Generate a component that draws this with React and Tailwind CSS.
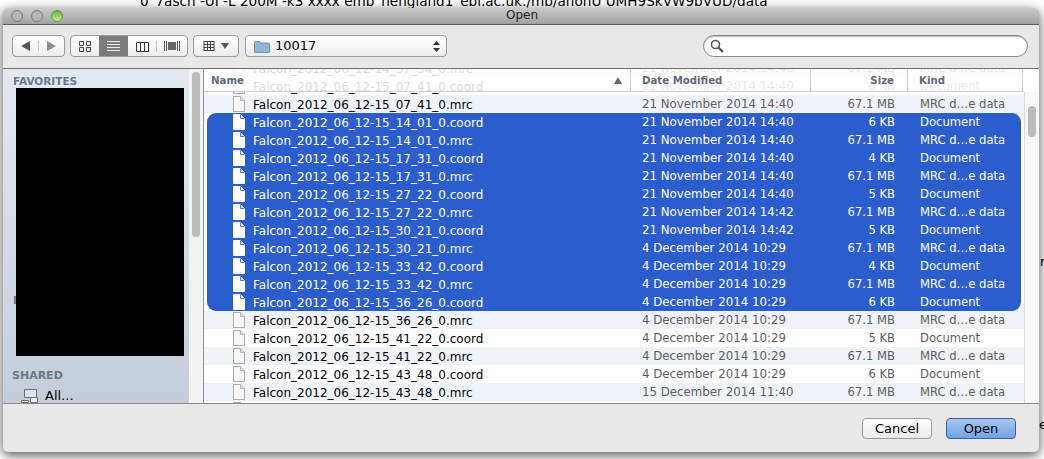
import React from "react";

const prefix = "Falcon_2012_06_12-";
const rows = [
  ["14_57_54_0.mrc", "21 November 2014 14:40", "67.1 MB", "MRC d…e data"],
  ["15_07_41_0.coord", "21 November 2014 14:40", "6 KB", "Document"],
  ["15_07_41_0.mrc", "21 November 2014 14:40", "67.1 MB", "MRC d…e data"],
  ["15_14_01_0.coord", "21 November 2014 14:40", "6 KB", "Document"],
  ["15_14_01_0.mrc", "21 November 2014 14:40", "67.1 MB", "MRC d…e data"],
  ["15_17_31_0.coord", "21 November 2014 14:40", "4 KB", "Document"],
  ["15_17_31_0.mrc", "21 November 2014 14:40", "67.1 MB", "MRC d…e data"],
  ["15_27_22_0.coord", "21 November 2014 14:40", "5 KB", "Document"],
  ["15_27_22_0.mrc", "21 November 2014 14:42", "67.1 MB", "MRC d…e data"],
  ["15_30_21_0.coord", "21 November 2014 14:42", "5 KB", "Document"],
  ["15_30_21_0.mrc", "4 December 2014 10:29", "67.1 MB", "MRC d…e data"],
  ["15_33_42_0.coord", "4 December 2014 10:29", "4 KB", "Document"],
  ["15_33_42_0.mrc", "4 December 2014 10:29", "67.1 MB", "MRC d…e data"],
  ["15_36_26_0.coord", "4 December 2014 10:29", "6 KB", "Document"],
  ["15_36_26_0.mrc", "4 December 2014 10:29", "67.1 MB", "MRC d…e data"],
  ["15_41_22_0.coord", "4 December 2014 10:29", "5 KB", "Document"],
  ["15_41_22_0.mrc", "4 December 2014 10:29", "67.1 MB", "MRC d…e data"],
  ["15_43_48_0.coord", "4 December 2014 10:29", "6 KB", "Document"],
  ["15_43_48_0.mrc", "15 December 2014 11:40", "67.1 MB", "MRC d…e data"],
];

const DocIcon = ({ selected }) => (
  <svg width="12" height="16" viewBox="0 0 12 16" className="shrink-0">
    <path d="M.5 .5H7.500L11.500 4.500V15.500H.5Z" fill={selected ? "#ffffff" : "#f7f7f7"} stroke={selected ? "#ffffff" : "#a9a9a9"} />
    <path d="M7.500 .5V4.500H11.500" fill={selected ? "#e4e8f2" : "#e2e2e2"} stroke={selected ? "#2c5dcd" : "#a9a9a9"} strokeWidth=".8" />
  </svg>
);

const Row = ({ row, index }) => {
  const selected = index >= 3 && index <= 13;
  const radius = index === 3 ? "rounded-t-[9px]" : index === 13 ? "rounded-b-[9px]" : "";
  const band = index % 2 === 0 ? "bg-[#eff2f7]" : "bg-white";
  return (
    <div className={`h-[18px] ${selected ? "bg-white" : band}`}>
      <div className={`mx-[3px] flex h-[18px] items-center whitespace-nowrap text-[12px] ${selected ? `bg-[#2c5dcd] text-white ${radius}` : "text-[#5e5e5e]"}`}>
        <div className={`flex w-[435px] items-center gap-[8px] pl-[26px] ${selected ? "text-white" : "text-black"}`}>
          <DocIcon selected={selected} />
          <span className="pt-[1px]">{prefix}{row[0]}</span>
        </div>
        <div className="w-[183px] pt-[2px] text-[11.8px]">{row[1]}</div>
        <div className="w-[70px] pt-[2px] text-right text-[11.6px]">{row[2]}</div>
        <div className="pl-[25px] pt-[2px] text-[11.6px]">{row[3]}</div>
      </div>
    </div>
  );
};

const Seg = ({ children, className = "" }) => (
  <div className={`flex h-[22px] items-center rounded-[4px] border border-[#9a9a9a] bg-gradient-to-b from-white to-[#ececec] ${className}`}>
    {children}
  </div>
);

const Toolbar = () => (
  <div className="flex h-[44px] shrink-0 items-center border-b border-[#6f6f6f] bg-[#e8e8e8] pb-[1px] pl-[9px] pr-[11px]">
    <Seg className="w-[53px]">
      <div className="flex w-[26px] justify-center border-r border-[#c4c4c4]">
        <svg width="9" height="10"><path d="M9 0V10L0 5Z" fill="#555" /></svg>
      </div>
      <div className="flex flex-1 justify-center">
        <svg width="9" height="10"><path d="M0 0V10L9 5Z" fill="#8c8c8c" /></svg>
      </div>
    </Seg>
    <Seg className="ml-[5px] w-[118px] overflow-hidden">
      <div className="flex w-[28px] justify-center">
        <svg width="12" height="11"><path d="M.5 .5h4v4h-4zM7.500 .5h4v4h-4zM.5 6.500h4v4h-4zM7.500 6.500h4v4h-4z" fill="none" stroke="#444" /></svg>
      </div>
      <div className="flex h-full w-[29px] items-center justify-center bg-[#7b7b7b]">
        <svg width="13" height="12"><path d="M0 1.500h13M0 4.500h13M0 7.500h13M0 10.500h13" stroke="#eee" /></svg>
      </div>
      <div className="flex w-[29px] justify-center border-r border-[#c4c4c4]">
        <svg width="13" height="11"><path d="M.5 1.500h12v9h-12zM4.500 1.500v9M8.500 1.500v9" fill="none" stroke="#333" /></svg>
      </div>
      <div className="flex flex-1 justify-center">
        <svg width="16" height="12"><path d="M.5 1v10M15.500 1v10M2.500 1v10M13.500 1v10" stroke="#555" /><rect x="4" y="2" width="8" height="8" fill="#666" /></svg>
      </div>
    </Seg>
    <Seg className="ml-[5px] w-[46px] justify-center gap-[6px]">
      <svg width="12" height="10"><path d="M1 .5h10M1 3.500h10M1 6.500h10M1 9.500h10M1 0v10M4.500 0v10M7.500 0v10M11 0v10" stroke="#444" /></svg>
      <svg width="8" height="6"><path d="M0 0H8L4 6Z" fill="#555" /></svg>
    </Seg>
    <Seg className="ml-[6px] w-[202px] pl-[8px] pr-[6px] text-[13px] text-black">
      <svg width="16" height="13" viewBox="0 0 16 13" className="mr-[5px]">
        <path d="M.5 2.500a1 1 0 0 1 1-1h4l1 1.500h8a1 1 0 0 1 1 1v8a.5.5 0 0 1-.5.500h-14a.5.5 0 0 1-.5-.5z" fill="#8fb6d6" stroke="#6c94b6" />
      </svg>
      <span className="flex-1">10017</span>
      <svg width="7" height="11"><path d="M0 4L3.500 0 7 4ZM0 7L3.500 11 7 7Z" fill="#333" /></svg>
    </Seg>
    <div className="ml-auto flex h-[22px] w-[325px] items-center rounded-full border border-[#8c8c8c] bg-white pl-[6px] shadow-[inset_0_1px_1px_#bbb]">
      <svg width="14" height="14" viewBox="0 0 14 14"><circle cx="5.500" cy="5.500" r="4" fill="none" stroke="#555" strokeWidth="1.600" /><path d="M8.500 8.500L13 13" stroke="#444" strokeWidth="2" /></svg>
    </div>
  </div>
);

const Sidebar = () => (
  <div className="relative w-[186px] shrink-0 overflow-hidden bg-gradient-to-b from-[#e3e9f0] to-[#c5cdd8]">
    <div className="pl-[10px] pt-[5px] text-[10.500px] font-bold leading-[14px] text-[#6b7789]">FAVORITES</div>
    <div className="absolute left-[10px] top-[224px] text-[10.500px] font-bold leading-[14px] text-[#6b7789]">DEVICES</div>
    <div className="relative ml-[13px] h-[268px] w-[168px] bg-black" />
    <div className="pl-[9px] pt-[13px] text-[11px] font-bold leading-[14px] text-[#6b7789]">SHARED</div>
    <div className="flex items-center gap-[6px] pl-[18px] pt-[5px] text-[13px] leading-[16px] text-black">
      <svg width="18" height="14" viewBox="0 0 18 14"><path d="M3.500 .5h12v8h-12z" fill="#dfe3e8" stroke="#6a7078" /><path d="M.5 11.500h7v2h-7zM9.500 8.500h7v5h-7z" fill="#eef0f3" stroke="#6a7078" /></svg>
      <span>All...</span>
    </div>
  </div>
);

const FileList = () => (
  <div className="relative w-[820px] shrink-0 overflow-hidden bg-white">
    <div className="-mt-[10px]">
      {rows.map((row, i) => (
        <Row key={row[0]} row={row} index={i} />
      ))}
      <div className="flex h-[18px] items-start pl-[29px] pt-[1px]">
        <DocIcon />
      </div>
    </div>
    {/* header sits over the scrolled rows, they show through a little */}
    <div className="absolute inset-x-0 top-0 flex h-[23px] items-center border-b border-[#cfcfcf] bg-white/85 pt-[1px] text-[10.200px] font-bold text-[#5c6a7c]">
      <div className="flex h-full w-[427px] items-center border-r border-[#cfcfcf] pl-[7px] pr-[8px]">
        <span className="flex-1">Name</span>
        <svg width="8" height="7"><path d="M0 7L4 0 8 7Z" fill="#666" /></svg>
      </div>
      <div className="flex h-full w-[180px] items-center border-r border-[#cfcfcf] pl-[11px]">Date Modified</div>
      <div className="flex h-full w-[97px] items-center justify-end border-r border-[#cfcfcf] pr-[13px]">Size</div>
      <div className="flex h-full w-[115px] items-center border-r border-[#cfcfcf] pl-[11px]">Kind</div>
    </div>
  </div>
);

const Thumb = ({ top, height }) => (
  <div className="mx-[3px] rounded-full bg-[#bcbcbc]" style={{ marginTop: top, height }} />
);

export default function App() {
  return (
    <div className="relative h-[459px] w-[1044px] overflow-hidden bg-white font-['DejaVu_Sans',sans-serif]">
      <div className="h-[8px] overflow-hidden pl-[140px] text-[13.600px] leading-[8px] text-black">
        <div className="-mt-[3px] whitespace-nowrap">0_7asch -UI -L 200M -k3 xxxx emb_nengland1_ebi.ac.uk:/mb/anonU UMH9SkVW9bVUD/data</div>
      </div>
      <div className="absolute left-[1040px] top-[254px] text-[13px] leading-[16px] text-black">n</div>
      <div className="absolute left-[1039px] top-[417px] text-[13px] leading-[16px] text-black">e</div>
      <div className="relative ml-[3px] flex h-[444px] w-[1036px] flex-col overflow-hidden rounded-[5px] bg-[#e8e8e8] shadow-[0_3px_12px_rgba(0,0,0,0.7)]">
        <div className="flex h-[17px] shrink-0 items-center border-b border-[#5c5c5c] bg-gradient-to-b from-[#cbcbcb] to-[#a0a0a0] pb-[1px] pl-[8px]">
          <div className="flex gap-[8px]">
            <div className="h-[12px] w-[12px] rounded-full border border-[#7d7d7d] bg-[#b5b5b5]" />
            <div className="h-[12px] w-[12px] rounded-full border border-[#7d7d7d] bg-[#b5b5b5]" />
            <div className="h-[12px] w-[12px] rounded-full border border-[#5f9a3a] bg-gradient-to-b from-[#6fb044] to-[#c2ec8f]" />
          </div>
          <div className="-mt-[1px] flex-1 pr-[58px] text-center text-[12px] text-[#222]">Open</div>
        </div>
        <Toolbar />
        <div className="flex h-[335px] shrink-0 border-b border-[#8a8a8a]">
          <Sidebar />
          <div className="w-[15px] shrink-0 border-r border-[#8f8f8f] bg-[#f2f2f2]">
            <Thumb top={3} height={165} />
          </div>
          <FileList />
          <div className="flex w-[15px] shrink-0 flex-col bg-white">
            <div className="mt-[23px] flex-1 border-l border-[#dcdcdc] bg-[#f7f7f7]">
              <Thumb top={14} height={31} />
            </div>
          </div>
        </div>
        <div className="flex flex-1 items-center justify-end gap-[14px] pr-[23px] text-[13px]">
          <button className="h-[21px] w-[70px] rounded-[4px] border border-[#9a9a9a] bg-gradient-to-b from-white to-[#eaeaea] text-black">Cancel</button>
          <button className="h-[21px] w-[70px] rounded-[4px] border border-[#3f5f9f] bg-gradient-to-b from-[#a9c8f0] to-[#6fa3e4] text-black">Open</button>
        </div>
      </div>
    </div>
  );
}
